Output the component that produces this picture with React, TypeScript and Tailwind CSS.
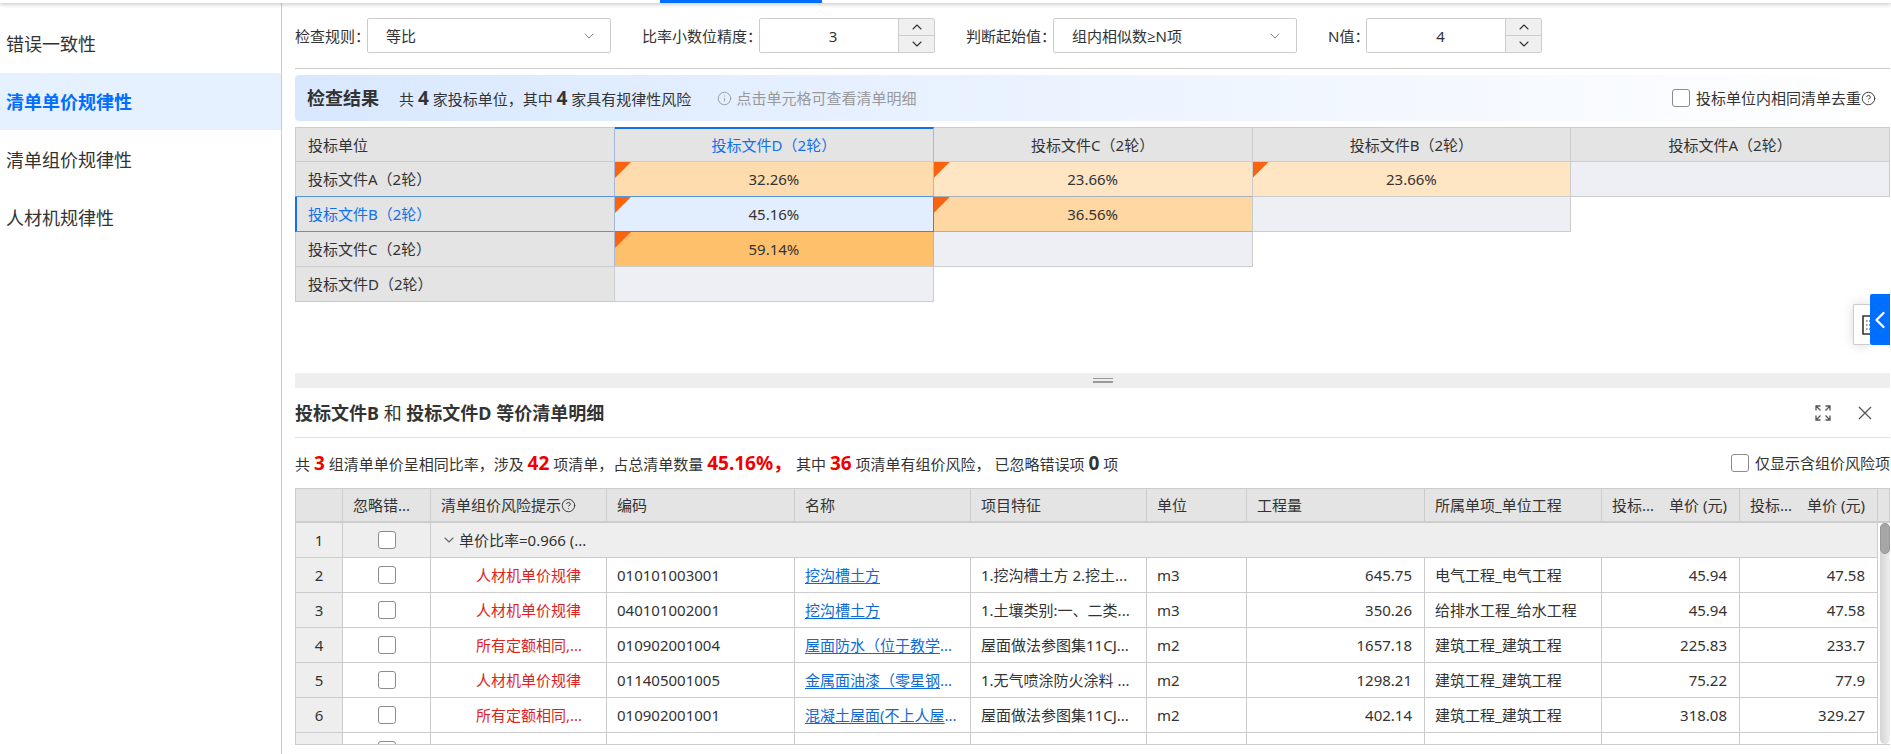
import React from 'react';
import clsx from 'clsx';
import { ChevronDown, ChevronLeft, ChevronUp, HelpCircle, Info } from 'lucide-react';

const menu = ['错误一致性', '清单单价规律性', '清单组价规律性', '人材机规律性'];

type Cell = { value: string; className: string };

const matrixHead = ['投标文件D（2轮）', '投标文件C（2轮）', '投标文件B（2轮）', '投标文件A（2轮）'];

const matrix: { name: string; active?: boolean; cells: Cell[] }[] = [
  {
    name: '投标文件A（2轮）',
    cells: [
      { value: '32.26%', className: 'bg-[#fedcae] border-r-[#a3b8dc] border-b-[#5a93dd]' },
      { value: '23.66%', className: 'bg-[#fee5c4] border-b-[#a9b0bb]' },
      { value: '23.66%', className: 'bg-[#fee5c4]' },
      { value: '', className: 'bg-[#eeeff4]' },
    ],
  },
  {
    name: '投标文件B（2轮）',
    active: true,
    cells: [
      { value: '45.16%', className: 'bg-[#e2eefe] border-r-[#3f86dd] border-b-[#3f86dd]' },
      { value: '36.56%', className: 'bg-[#fed7a3] border-b-[#a9b0bb]' },
      { value: '', className: 'bg-[#eeeff4]' },
    ],
  },
  {
    name: '投标文件C（2轮）',
    cells: [
      { value: '59.14%', className: 'bg-[#fec06b] border-r-[#a3b8dc]' },
      { value: '', className: 'bg-[#eeeff4]' },
    ],
  },
  {
    name: '投标文件D（2轮）',
    cells: [{ value: '', className: 'bg-[#eeeff4]' }],
  },
];

const details = [
  { risk: '人材机单价规律', code: '010101003001', name: '挖沟槽土方', more: '', feature: '1.挖沟槽土方 2.挖土...', unit: 'm3', qty: '645.75', project: '电气工程_电气工程', b: '45.94', d: '47.58' },
  { risk: '人材机单价规律', code: '040101002001', name: '挖沟槽土方', more: '', feature: '1.土壤类别:一、二类...', unit: 'm3', qty: '350.26', project: '给排水工程_给水工程', b: '45.94', d: '47.58' },
  { risk: '所有定额相同,...', code: '010902001004', name: '屋面防水（位于教学', more: '...', feature: '屋面做法参图集11CJ...', unit: 'm2', qty: '1657.18', project: '建筑工程_建筑工程', b: '225.83', d: '233.7' },
  { risk: '人材机单价规律', code: '011405001005', name: '金属面油漆（零星钢', more: '...', feature: '1.无气喷涂防火涂料 ...', unit: 'm2', qty: '1298.21', project: '建筑工程_建筑工程', b: '75.22', d: '77.9' },
  { risk: '所有定额相同,...', code: '010902001001', name: '混凝土屋面(不上人屋', more: '...', feature: '屋面做法参图集11CJ...', unit: 'm2', qty: '402.14', project: '建筑工程_建筑工程', b: '318.08', d: '329.27' },
];

function Checkbox({ id, label }: { id: string; label?: string }) {
  return (
    <input
      id={id}
      type="checkbox"
      aria-label={label}
      className="block size-[18px] shrink-0 appearance-none rounded-[3px] border border-[#8c8c8c] bg-white checked:bg-[#006eff]"
    />
  );
}

function SelectField({ id, label, options }: { id: string; label: string; options: string[] }) {
  return (
    <div className="flex items-center">
      <label htmlFor={id} className="-mr-[3px] whitespace-nowrap">{label}</label>
      <div className="relative">
        <select
          id={id}
          className="block h-[35px] w-[244px] appearance-none rounded-[2px] border border-[#cccccc] bg-white pl-[18px] pr-10"
        >
          {options.map((option) => (
            <option key={option}>{option}</option>
          ))}
        </select>
        <ChevronDown className="pointer-events-none absolute right-[14px] top-[10px] size-4 text-[#888888]" strokeWidth={1.5} />
      </div>
    </div>
  );
}

function NumberField({ id, label, value }: { id: string; label: string; value: number }) {
  return (
    <div className="flex items-center">
      <label htmlFor={id} className="-mr-[3px] whitespace-nowrap">{label}</label>
      <div className="flex h-[35px] w-[176px] overflow-hidden rounded-[2px] border border-[#cccccc]">
        <input id={id} type="text" inputMode="numeric" defaultValue={value} className="min-w-0 flex-1 pl-2 text-center" />
        <div className="flex w-[36px] flex-col border-l border-[#cccccc] bg-[#f0f0f0]">
          <button type="button" aria-label="增加" className="flex flex-1 items-center justify-center border-b border-[#cccccc]">
            <ChevronUp className="size-4" strokeWidth={1.7} />
          </button>
          <button type="button" aria-label="减少" className="flex flex-1 items-center justify-center">
            <ChevronDown className="size-4" strokeWidth={1.7} />
          </button>
        </div>
      </div>
    </div>
  );
}

function FullscreenIcon() {
  return (
    <svg width="16" height="16" viewBox="0 0 16 16" fill="none" stroke="currentColor" strokeWidth="1.3">
      <path d="M1 5.5V1H5.5M1 1L5.5 5.5" />
      <path d="M10.5 1H15V5.5M15 1L10.5 5.5" />
      <path d="M1 10.5V15H5.5M1 15L5.5 10.5" />
      <path d="M10.5 15H15V10.5M15 15L10.5 10.5" />
    </svg>
  );
}

function CloseIcon() {
  return (
    <svg width="14" height="14" viewBox="0 0 14 14" fill="none" stroke="currentColor" strokeWidth="1.3">
      <path d="M1 1L13 13M13 1L1 13" />
    </svg>
  );
}

function ResultTable() {
  return (
    <table className="w-full table-fixed border-separate border-spacing-0">
      <colgroup>
        <col className="w-[320px]" />
        <col span={4} />
      </colgroup>
      <thead>
        <tr className="h-[35px] bg-[#e4e4e4]">
          <th className="border border-[#cccccc] border-r-[#a3b8dc] pl-3 text-left font-normal">投标单位</th>
          {matrixHead.map((title, i) => (
            <th
              key={title}
              className={clsx(
                'border-y border-r border-[#cccccc] font-normal',
                i === 0 && 'border-r-[#a3b8dc] border-t-2 border-t-[#1170ea] text-[#1170ea]',
              )}
            >
              {title}
            </th>
          ))}
        </tr>
      </thead>
      <tbody>
        {matrix.map((row, index) => (
          <tr key={row.name} className="h-[35px]">
            <th
              scope="row"
              className={clsx(
                'border-x border-b border-[#cccccc] bg-[#e4e4e4] text-left font-normal',
                row.active ? 'border-l-2 border-b-[#5a93dd] border-l-[#1170ea] pl-[11px] text-[#1170ea]' : 'pl-3',
                index === 0 && 'border-b-[#5a93dd]',
                index < 3 && 'border-r-[#a3b8dc]',
              )}
            >
              {row.name}
            </th>
            {row.cells.map((cell, i) => (
              <td key={i} className={clsx('relative border-b border-r border-[#cccccc] text-center', cell.className)}>
                {cell.value && (
                  <span className="absolute left-0 top-0 size-4 bg-[#fa640f] [clip-path:polygon(0_0,100%_0,0_100%)]" />
                )}
                {cell.value}
              </td>
            ))}
          </tr>
        ))}
      </tbody>
    </table>
  );
}

function DetailTable() {
  const th = 'border-b-2 border-r border-t border-[#cccccc] px-[10px] text-left font-normal whitespace-nowrap';
  const td = 'border-b border-r border-[#cccccc] px-[10px] whitespace-nowrap overflow-hidden';
  const num = 'border-b border-r border-[#cccccc] pr-3 text-right';
  const index = 'border-b border-x border-[#cccccc] bg-[#eeeeee] text-center';

  return (
    <div className="relative min-h-0 flex-1 overflow-hidden border-b border-[#cccccc]">
      <table className="w-full table-fixed border-separate border-spacing-0">
        <colgroup>
          <col className="w-[48px]" />
          <col className="w-[88px]" />
          <col className="w-[176px]" />
          <col className="w-[188px]" />
          <col className="w-[176px]" />
          <col className="w-[176px]" />
          <col className="w-[100px]" />
          <col className="w-[178px]" />
          <col className="w-[177px]" />
          <col className="w-[138px]" />
          <col className="w-[138px]" />
          <col className="w-[12px]" />
        </colgroup>
        <thead>
          <tr className="h-[35px] bg-[#e4e4e4]">
            <th className="border-x border-b-2 border-t border-[#cccccc]" />
            <th className={th}>忽略错...</th>
            <th className={th}>
              <span className="flex items-center">
                清单组价风险提示
                <HelpCircle className="size-[15px]" strokeWidth={1.5} />
              </span>
            </th>
            <th className={th}>编码</th>
            <th className={th}>名称</th>
            <th className={th}>项目特征</th>
            <th className={th}>单位</th>
            <th className={th}>工程量</th>
            <th className={th}>所属单项_单位工程</th>
            <th className={th}>
              <span className="flex justify-between pr-[2px]"><span>投标...</span><span>单价 (元)</span></span>
            </th>
            <th className={th}>
              <span className="flex justify-between pr-[2px]"><span>投标...</span><span>单价 (元)</span></span>
            </th>
            <th className="border-b-2 border-r border-t border-[#cccccc]" />
          </tr>
        </thead>
        <tbody>
          <tr className="h-[35px] bg-[#eeeeee]">
            <td className={index}>1</td>
            <td className={td}>
              <div className="flex justify-center"><Checkbox id="ignore-1" label="忽略 1" /></div>
            </td>
            <td colSpan={9} className={td}>
              <span className="flex items-center gap-[2px]">
                <ChevronDown className="size-4 text-[#666666]" strokeWidth={1.7} />
                单价比率=0.966 (...
              </span>
            </td>
            <td className="bg-white" />
          </tr>
          {details.map((row, i) => (
            <tr key={row.code} className="h-[35px]">
              <td className={index}>{i + 2}</td>
              <td className={td}>
                <div className="flex justify-center"><Checkbox id={`ignore-${i + 2}`} label={`忽略 ${i + 2}`} /></div>
              </td>
              <td className="border-b border-r border-[#cccccc] pl-[45px] whitespace-nowrap text-[#e01f1f]">{row.risk}</td>
              <td className={td}>{row.code}</td>
              <td className={td}>
                <a href="#detail" className="text-[#0e6ad8]">
                  <span className="underline underline-offset-2">{row.name}</span>{row.more}
                </a>
              </td>
              <td className={td}>{row.feature}</td>
              <td className={td}>{row.unit}</td>
              <td className={num}>{row.qty}</td>
              <td className={td}>{row.project}</td>
              <td className={num}>{row.b}</td>
              <td className={num}>{row.d}</td>
              <td />
            </tr>
          ))}
          <tr className="h-[35px]">
            <td className={index} />
            <td className={td}>
              <div className="flex justify-center"><Checkbox id="ignore-7" label="忽略 7" /></div>
            </td>
            <td className={td} />
            <td className={td} />
            <td className={td} />
            <td className={td} />
            <td className={td} />
            <td className={td} />
            <td className={td} />
            <td className={td} />
            <td className={td} />
            <td />
          </tr>
        </tbody>
      </table>
      {/* Scrollbar */}
      <div className="absolute bottom-0 right-0 top-[35px] w-[10px] rounded-full bg-gradient-to-r from-[#d4d4d4] to-[#eeeeee]">
        <div className="h-[31px] rounded-full border border-[#999999] bg-[#a6a6a6]" />
      </div>
    </div>
  );
}

export default function App() {
  return (
    <div className="flex h-screen flex-col overflow-hidden bg-white font-['Noto_Sans','Open_Sans','Noto_Sans_CJK_SC',sans-serif] text-[15px] leading-5 text-[#333333]">
      {/* Bottom edge of the top tab bar */}
      <header className="relative z-10 h-[3px] shrink-0 bg-white shadow-[0_1px_4px_rgba(0,0,0,0.3)]">
        <div className="ml-[660px] h-full w-[162px] bg-[#006eff]" />
      </header>

      <div className="flex min-h-0 flex-1">
        <nav className="flex w-[282px] shrink-0 flex-col gap-px border-r border-[#cccccc] pt-3 text-lg">
          {menu.map((item, i) => (
            <button
              key={item}
              type="button"
              className={clsx('h-[57px] pl-[6px] text-left', i === 1 && 'bg-[#e5f1ff] font-bold text-[#006eff]')}
            >
              {item}
            </button>
          ))}
        </nav>

        <main className="flex min-w-0 flex-1 flex-col pb-[9px] pl-[13px] pr-px">
          {/* Filters */}
          <form className="flex shrink-0 items-center gap-[31px] border-b border-[#cccccc] py-[15px]">
            <SelectField id="rule" label="检查规则：" options={['等比', '等差']} />
            <NumberField id="precision" label="比率小数位精度：" value={3} />
            <SelectField id="threshold" label="判断起始值：" options={['组内相似数≥N项']} />
            <NumberField id="n-value" label="N值：" value={4} />
          </form>

          {/* Check result */}
          <section className="flex h-[304px] shrink-0 flex-col gap-[6px] pt-[6px]">
            <div className="flex h-[46px] items-center rounded-[4px] bg-gradient-to-r from-[#d9e8ff] to-white pl-3 pr-[14px]">
              <h2 className="text-lg font-bold">检查结果</h2>
              <p className="pl-5">
                共 <b className="text-[19px] leading-5">4</b> 家投标单位，其中 <b className="text-[19px] leading-5">4</b> 家具有规律性风险
              </p>
              <p className="flex items-center gap-1 pl-[26px] text-[#999999]">
                <Info className="size-[15px]" strokeWidth={1.5} />
                点击单元格可查看清单明细
              </p>
              <div className="ml-auto flex items-center">
                <Checkbox id="dedupe" />
                <label htmlFor="dedupe" className="flex items-center pl-[6px]">
                  投标单位内相同清单去重
                  <HelpCircle className="size-[15px]" strokeWidth={1.5} />
                </label>
              </div>
            </div>
            <ResultTable />
          </section>

          {/* Splitter */}
          <div className="flex h-[15px] shrink-0 items-center justify-center bg-[#eeeeee] pl-5">
            <div className="h-[5px] w-5 border-y border-b-2 border-[#999999]" />
          </div>

          {/* Details */}
          <div className="flex h-[50px] shrink-0 items-center border-b border-[#e0e0e0] text-lg">
            <h3>
              <b>投标文件B</b> 和 <b>投标文件D</b> <b>等价清单明细</b>
            </h3>
            <div className="ml-auto flex items-center gap-[27px] pr-[18px] text-[#555555]">
              <button type="button" aria-label="全屏"><FullscreenIcon /></button>
              <button type="button" aria-label="关闭"><CloseIcon /></button>
            </div>
          </div>
          <div className="flex h-[50px] shrink-0 items-center">
            <p>
              共 <b className="text-[19px] leading-5 text-[#f00000]">3</b> 组清单单价呈相同比率，涉及{' '}
              <b className="text-[19px] leading-5 text-[#f00000]">42</b> 项清单，占总清单数量{' '}
              <b className="text-[19px] leading-5 text-[#f00000]">45.16%，</b> 其中{' '}
              <b className="text-[19px] leading-5 text-[#f00000]">36</b> 项清单有组价风险， 已忽略错误项{' '}
              <b className="text-[19px] leading-5">0</b> 项
            </p>
            <div className="ml-auto flex items-center">
              <Checkbox id="risk-only" />
              <label htmlFor="risk-only" className="pl-[6px]">仅显示含组价风险项</label>
            </div>
          </div>
          <DetailTable />
        </main>
      </div>

      {/* Drawer handle on the right edge */}
      <div className="fixed right-px top-[294px] flex items-end">
        <div className="flex h-[41px] w-[17px] items-center justify-end overflow-hidden rounded-l-[2px] border border-r-0 border-[#cccccc] bg-white shadow-[0_0_12px_rgba(0,0,0,0.15)]">
          <svg width="8" height="20" viewBox="0 0 8 20" className="shrink-0" fill="none" stroke="#333333">
            <path d="M8 1H1V19H8" strokeWidth="1.6" />
            <path d="M4 6H5.5M7 6H8M4 10H5.5M7 10H8M4 14H5.5M7 14H8" strokeWidth="1.2" />
          </svg>
        </div>
        <button type="button" aria-label="展开" className="relative flex h-[51px] w-5 items-center justify-center rounded-l-[2px] bg-[#006eff] text-white">
          <ChevronLeft className="size-7 shrink-0" strokeWidth={2} />
        </button>
      </div>
    </div>
  );
}
